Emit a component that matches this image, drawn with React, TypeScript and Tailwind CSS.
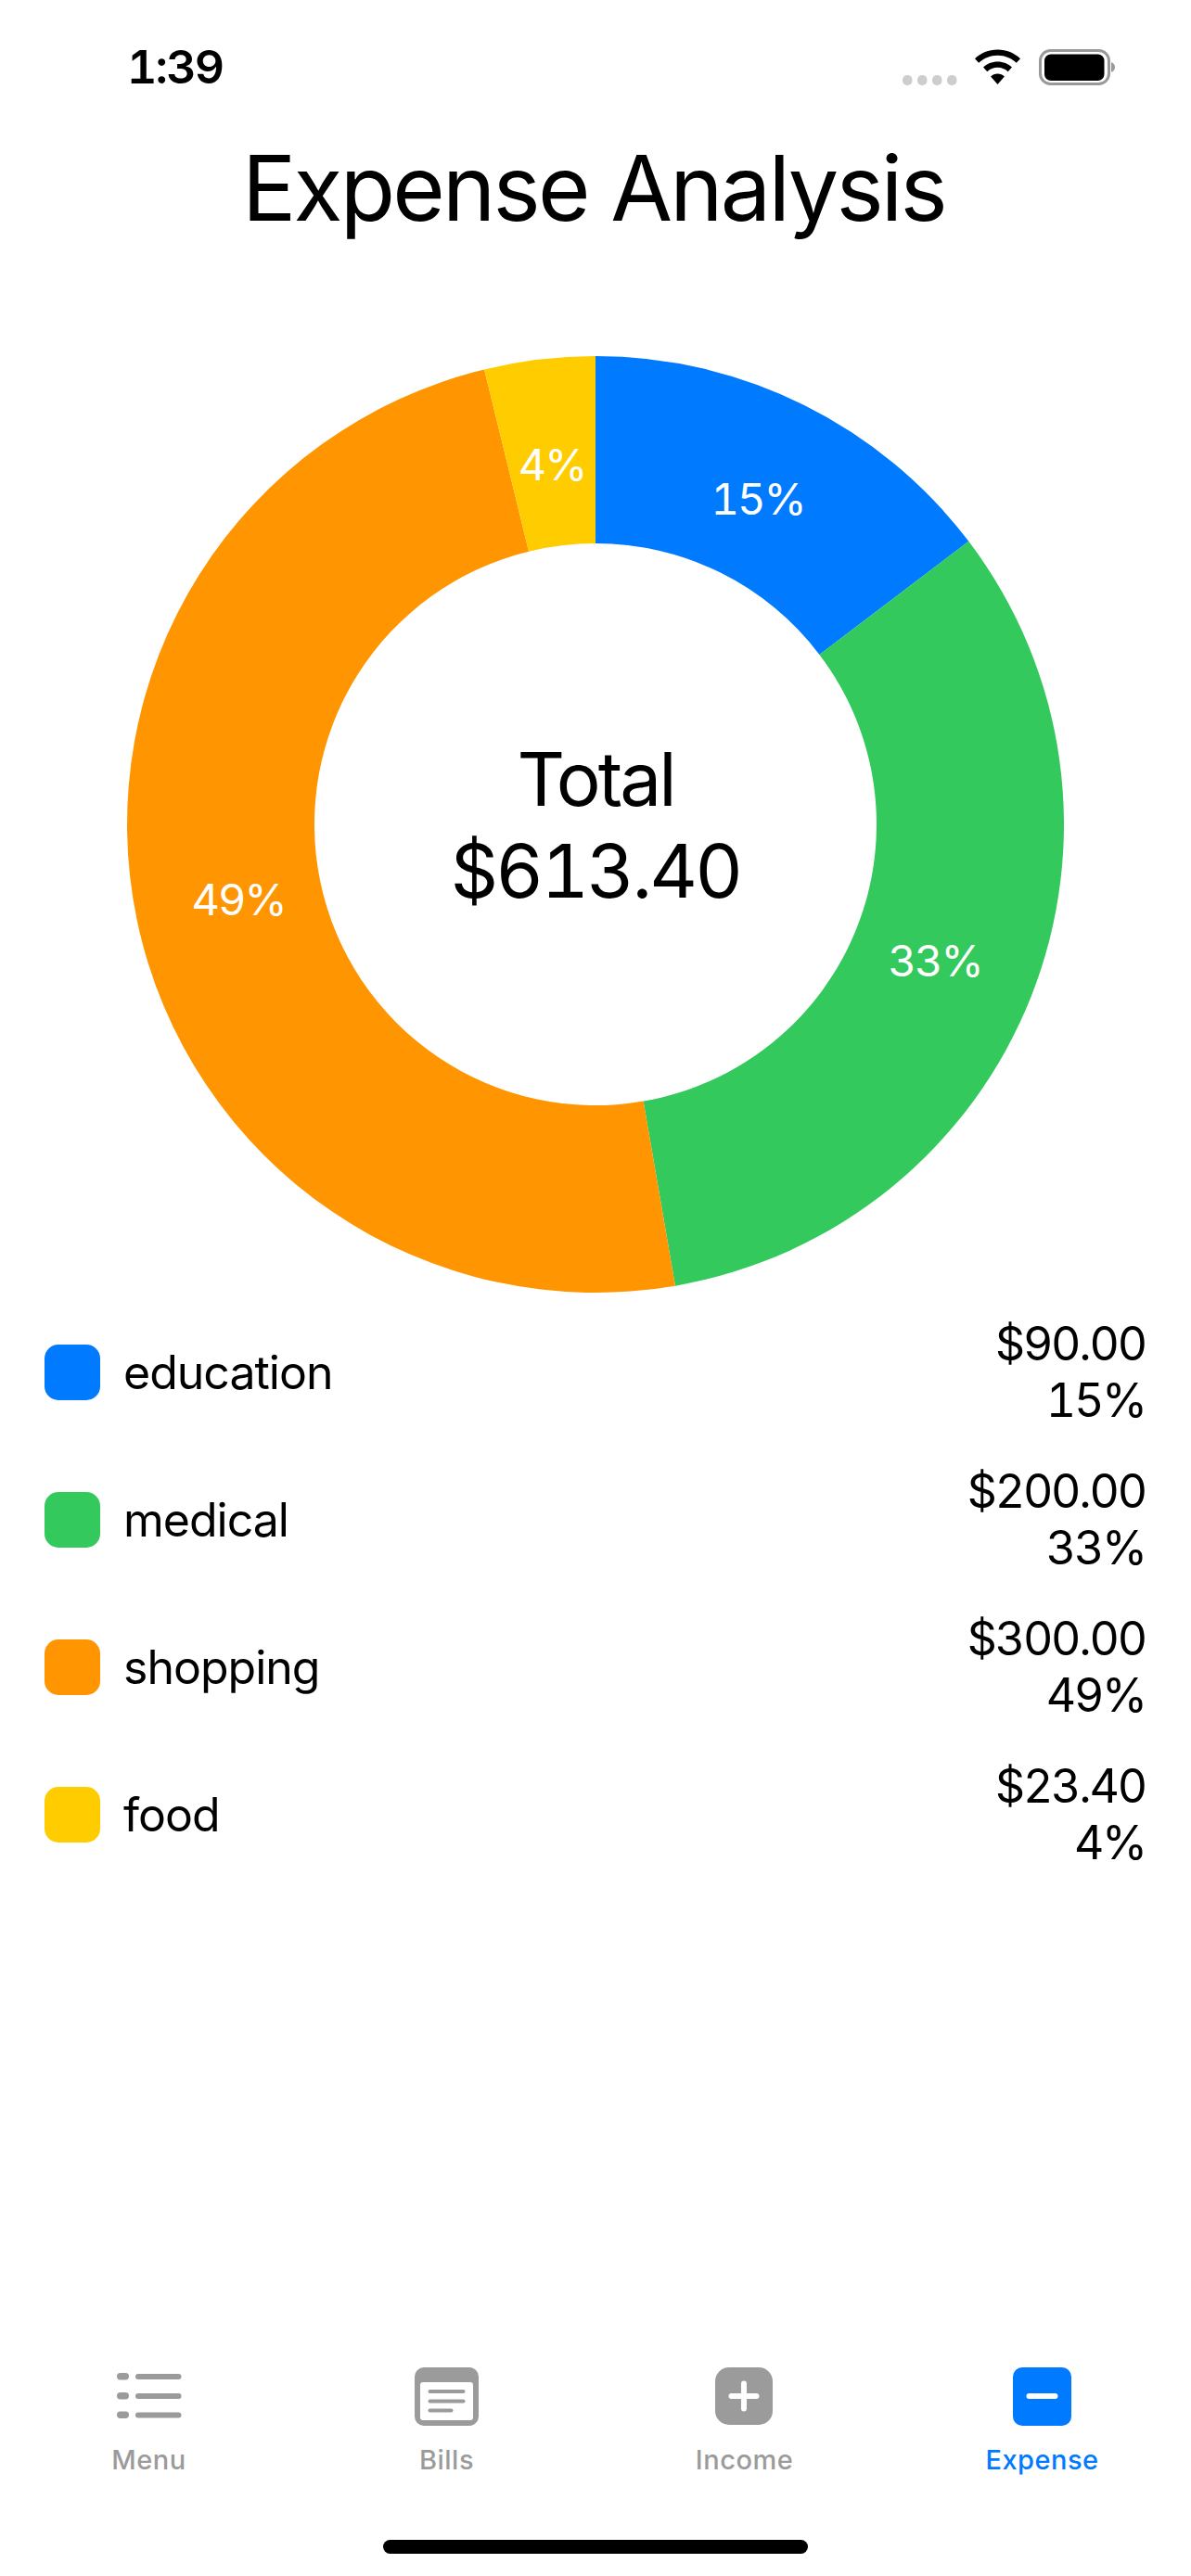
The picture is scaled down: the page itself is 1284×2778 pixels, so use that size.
const slices = [
  { name: "education", amount: "$90.00", value: 90, pct: "15%", color: "#007aff", labelX: 680, labelY: 153 },
  { name: "medical", amount: "$200.00", value: 200, pct: "33%", color: "#34c95c", labelX: 871, labelY: 651 },
  { name: "shopping", amount: "$300.00", value: 300, pct: "49%", color: "#ff9500", labelX: 120, labelY: 585 },
  { name: "food", amount: "$23.40", value: 23.4, pct: "4%", color: "#ffcc00", labelX: 458, labelY: 116 },
];

const total = 613.4;
const R = 505;
const r = 303;

function arcPath(start: number, end: number) {
  const pt = (rad: number, a: number) =>
    `${(505 + rad * Math.sin(a)).toFixed(2)} ${(505 - rad * Math.cos(a)).toFixed(2)}`;
  const large = end - start > Math.PI ? 1 : 0;
  return `M${pt(R, start)} A${R} ${R} 0 ${large} 1 ${pt(R, end)} L${pt(r, end)} A${r} ${r} 0 ${large} 0 ${pt(r, start)} Z`;
}

function Donut() {
  let angle = 0;
  return (
    <svg width="1010" height="1010" viewBox="0 0 1010 1010" className="block">
      {slices.map((s) => {
        const start = angle;
        angle += (s.value / total) * Math.PI * 2;
        return <path key={s.name} d={arcPath(start, angle)} fill={s.color} />;
      })}
      {slices.map((s) => (
        <text key={s.pct} x={s.labelX} y={s.labelY} fill="#fff" fontSize="47" textAnchor="middle" dominantBaseline="central" className="tabular-nums tracking-[-2px]">
          {s.pct}
        </text>
      ))}
    </svg>
  );
}

function StatusIcons() {
  return (
    <svg width="232" height="40" viewBox="0 0 232 40" className="block">
      <g fill="#cdcdcd">
        <rect x="3" y="28" width="10.5" height="11" rx="5" />
        <rect x="19" y="28" width="10.5" height="11" rx="5" />
        <rect x="35" y="28" width="10.5" height="11" rx="5" />
        <rect x="51" y="28" width="10.5" height="11" rx="5" />
      </g>
      <g fill="#000" transform="translate(27.5 0)">
        <path d="M78 0.5c-9.6 0-18.2 3.7-24.5 9.7l4.2 4.6c5.3-5 12.4-8.1 20.3-8.1s15 3.1 20.3 8.1l4.2-4.6C96.2 4.2 87.6 0.5 78 0.5Z" />
        <path d="M78 13.5c-6 0-11.5 2.3-15.5 6.1l4.3 4.7c2.9-2.8 6.9-4.5 11.2-4.5s8.3 1.7 11.2 4.5l4.3-4.7c-4-3.8-9.5-6.1-15.5-6.1Z" />
        <path d="M78 26.5c-2.9 0-5.5 1.1-7.4 2.9L78 38l7.4-8.6c-1.9-1.8-4.5-2.9-7.4-2.9Z" />
      </g>
      <rect x="151.5" y="1.5" width="74" height="36" rx="11" fill="none" stroke="#999" strokeWidth="3" />
      <rect x="156" y="5.5" width="64.5" height="28.5" rx="7" fill="#000" />
      <path d="M228 14c2.6 1 4 3.2 4 5.5s-1.4 4.5-4 5.5Z" fill="#999" />
    </svg>
  );
}

function MenuIcon() {
  return (
    <svg width="70" height="63" viewBox="0 0 70 63" className="block">
      <g fill="#9b9b9b">
        <rect x="0" y="6" width="13" height="7.5" rx="3.7" />
        <rect x="0" y="27" width="13" height="7.5" rx="3.7" />
        <rect x="0" y="47.5" width="13" height="7.5" rx="3.7" />
        <rect x="20" y="7" width="49.5" height="6" rx="3" />
        <rect x="20" y="28" width="49.5" height="6" rx="3" />
        <rect x="20" y="48.5" width="49.5" height="6" rx="3" />
      </g>
    </svg>
  );
}

function BillsIcon() {
  return (
    <svg width="69" height="63" viewBox="0 0 69 63" className="block">
      <rect x="0" y="0" width="69" height="63" rx="10" fill="#9b9b9b" />
      <rect x="6" y="16" width="57" height="41" rx="3" fill="#fff" />
      <g fill="#9b9b9b">
        <rect x="14.5" y="24" width="40" height="4" rx="2" />
        <rect x="14.5" y="34.5" width="40" height="4" rx="2" />
        <rect x="14.5" y="44.5" width="27" height="4" rx="2" />
      </g>
    </svg>
  );
}

function IncomeIcon() {
  return (
    <svg width="62" height="63" viewBox="0 0 62 63" className="block -translate-x-[1px]">
      <rect x="0" y="0" width="62" height="62" rx="15" fill="#9b9b9b" />
      <rect x="14.5" y="28" width="33" height="6" rx="3" fill="#fff" />
      <rect x="28" y="14.5" width="6" height="33" rx="3" fill="#fff" />
    </svg>
  );
}

function ExpenseIcon() {
  return (
    <svg width="63" height="63" viewBox="0 0 63 63" className="block">
      <rect x="0" y="0" width="63" height="63" rx="10" fill="#007aff" />
      <rect x="14.5" y="28" width="34" height="6" rx="3" fill="#fff" />
    </svg>
  );
}

const tabs = [
  { label: "Menu", icon: <MenuIcon />, active: false },
  { label: "Bills", icon: <BillsIcon />, active: false },
  { label: "Income", icon: <IncomeIcon />, active: false },
  { label: "Expense", icon: <ExpenseIcon />, active: true },
];

export default function App() {
  return (
    <div className="w-[1284px] h-[2778px] bg-white flex flex-col text-black font-['Inter',sans-serif]">
      {/* status bar */}
      <div className="h-[110px] flex items-start justify-between pt-[48px] pl-[137px] pr-[82px]">
        <span className="text-[50px] leading-[48px] font-semibold tracking-[-1.8px] tabular-nums">1:39</span>
        <div className="pt-[5px]">
          <StatusIcons />
        </div>
      </div>

      <h1 className="h-[190px] pt-[35px] pr-[4px] text-center text-[97px] leading-[116px] font-normal tracking-[-2.8px]">Expense Analysis</h1>

      <div className="relative w-[1010px] h-[1010px] mt-[84px] ml-[137px]">
        <Donut />
        <div className="absolute inset-0 flex flex-col items-center justify-center text-[80px] leading-[99px]">
          <span className="tracking-[-3px]">Total</span>
          <span className="tabular-nums tracking-[-2.8px]">$613.40</span>
        </div>
      </div>

      {/* legend */}
      <div className="flex flex-col gap-[37px] mt-[25px] pl-[48px] pr-[49px]">
        {slices.map((s) => (
          <div key={s.name} className="flex items-center justify-between h-[122px]">
            <div className="flex items-center gap-[25px]">
              <div className="w-[60px] h-[60px] rounded-[15px]" style={{ backgroundColor: s.color }} />
              <span className="text-[50px] leading-[60px] tracking-[-1px]">{s.name}</span>
            </div>
            <div className="text-right text-[50px] leading-[61px] tracking-[-2.2px] tabular-nums">
              <div>{s.amount}</div>
              <div>{s.pct}</div>
            </div>
          </div>
        ))}
      </div>

      {/* tab bar */}
      <div className="mt-auto grid grid-cols-4">
        {tabs.map((t) => (
          <div key={t.label} className="flex flex-col items-center">
            <div className="h-[63px] flex items-center justify-center">{t.icon}</div>
            <span
              className={`mt-[19px] text-[29px] leading-[36px] tracking-[0.5px] ${t.active ? "text-[#007aff] font-medium" : "text-[#9b9b9b] font-medium"}`}
            >
              {t.label}
            </span>
          </div>
        ))}
      </div>
      <div className="flex justify-center mt-[68px] mb-[24px]">
        <div className="w-[458px] h-[15px] rounded-full bg-black" />
      </div>
    </div>
  );
}
